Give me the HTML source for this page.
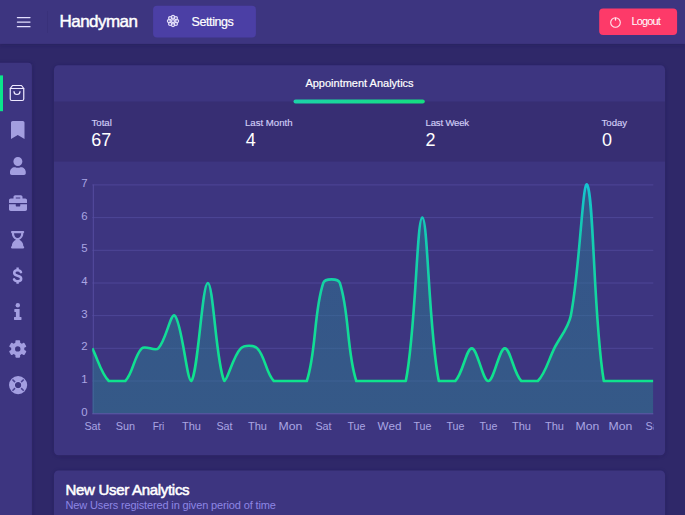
<!DOCTYPE html>
<html>
<head>
<meta charset="utf-8">
<title>Handyman</title>
<style>
*{box-sizing:border-box;margin:0;padding:0}
html,body{width:685px;height:515px;overflow:hidden}
body{background:#2f2869;font-family:"Liberation Sans",sans-serif;position:relative;color:#fff}
.abs{position:absolute}
.brand{left:59.5px;top:10.7px;font-size:17px;line-height:22px;letter-spacing:-.55px;white-space:nowrap;color:#fff;-webkit-text-stroke:.45px #fff}
.btn-set{left:153px;top:6px;width:103px;height:32px}
.btn-set span{position:absolute;left:38.5px;top:6.8px;font-size:12.5px;line-height:18px;letter-spacing:-.4px;white-space:nowrap;-webkit-text-stroke:.2px #fff}
.btn-out{left:599px;top:8px;width:78px;height:27px}
.btn-out span{position:absolute;left:32.5px;top:6.4px;font-size:11px;line-height:15px;letter-spacing:-.88px;white-space:nowrap}
.ico{fill:#a39ee0}
.tab{left:54px;width:611px;text-align:center;font-size:11px;line-height:14px;top:76.4px;white-space:nowrap;-webkit-text-stroke:.2px #fff}
.lab{font-size:9.6px;line-height:12px;color:#d2cef7;white-space:nowrap;-webkit-text-stroke:.15px #d2cef7}
.num{font-size:18px;line-height:20px;color:#fff;white-space:nowrap}
.t2{left:65.5px;top:480.6px;font-size:15px;line-height:18px;white-space:nowrap;letter-spacing:-.3px;-webkit-text-stroke:.55px #fff}
.s2{left:65.5px;top:497.7px;font-size:11px;line-height:14px;color:#8d86e4;white-space:nowrap;letter-spacing:-.14px}
svg{position:absolute;overflow:visible}
svg text{font-family:"Liberation Sans",sans-serif;fill:#aaa5e3}
</style>
</head>
<body>
<svg style="left:0;top:0" width="685" height="515" viewBox="0 0 685 515">
  <defs>
    <filter id="sh" x="-10%" y="-10%" width="120%" height="120%"><feGaussianBlur stdDeviation="2.2"/></filter>
    <linearGradient id="tb" x1="0" x2="1" y1="0" y2="0"><stop offset="0" stop-color="#1cd2a8"/><stop offset="1" stop-color="#15de80"/></linearGradient>
  </defs>
  <!-- shadows -->
  <g fill="#1d1850" opacity=".42" filter="url(#sh)">
    <rect x="0" y="0" width="685" height="44.5"/>
    <rect x="-8" y="64" width="39.5" height="470"/>
    <rect x="54.5" y="66.5" width="610" height="389.5" rx="5"/>
    <rect x="54.5" y="471.5" width="610" height="60" rx="5"/>
  </g>
  <!-- header -->
  <rect x="0" y="0" width="685" height="43.9" fill="#3d3580"/>
  <!-- sidebar -->
  <path d="M0 62.7H27.9a4 4 0 0 1 4 4V520H0z" fill="#3d3580"/>
  <rect x="0" y="75.4" width="3" height="35.8" fill="#0be58c"/>
  <!-- card 1 -->
  <rect x="54" y="65.3" width="611" height="390" rx="4.5" fill="#3d3580"/>
  <rect x="54" y="101.5" width="611" height="60.1" fill="#372e73"/>
  <rect x="293.5" y="99.4" width="131.3" height="4.2" rx="2.1" fill="url(#tb)"/>
  <!-- card 2 -->
  <rect x="54" y="470.4" width="611" height="60" rx="4.5" fill="#3d3580"/>
  <!-- buttons -->
  <rect x="153.1" y="5.7" width="102.8" height="31.9" rx="4" fill="#4b3fa5"/>
  <rect x="599.2" y="8.4" width="77.9" height="26.6" rx="4" fill="#fd3a69"/>
  <!-- burger -->
  <g stroke="#e4e0ff" stroke-width="1.25" stroke-linecap="round"><path d="M17.4 17.5H30M17.4 22.1H30M17.4 26.7H30"/></g>
  <path d="M47.5 11V33" stroke="#39317a" stroke-width="1"/>
</svg>
<div class="abs brand">Handyman</div>

<div class="abs btn-set">
  <svg style="left:13.2px;top:8.4px" width="14" height="14" viewBox="-7 -7 14 14" fill="none" stroke="#e4e0fa" stroke-width="1.25"><circle cx="0" cy="0" r="1.5"/><circle cx="4.10" cy="0.00" r="1.5"/><circle cx="2.90" cy="2.90" r="1.5"/><circle cx="0.00" cy="4.10" r="1.5"/><circle cx="-2.90" cy="2.90" r="1.5"/><circle cx="-4.10" cy="0.00" r="1.5"/><circle cx="-2.90" cy="-2.90" r="1.5"/><circle cx="-0.00" cy="-4.10" r="1.5"/><circle cx="2.90" cy="-2.90" r="1.5"/></svg>
  <span>Settings</span>
</div>

<div class="abs btn-out">
  <svg style="left:11.3px;top:8.9px" width="11" height="11" viewBox="0 0 22 22" fill="none" stroke="#ffe9ef" stroke-width="2.2" stroke-linecap="round">
    <circle cx="11" cy="11" r="9.6"/>
    <path d="M11 3V6.2" stroke-width="2.8"/>
  </svg>
  <span>Logout</span>
</div>


<!-- sidebar icons -->
<svg style="left:7.9px;top:84.2px" width="18" height="18" viewBox="0 0 24 24" fill="none" stroke="#efeaff" stroke-width="1.6" stroke-linecap="round" stroke-linejoin="round"><path d="M6 2L3 6v14a2 2 0 0 0 2 2h14a2 2 0 0 0 2-2V6l-3-4z"/><path d="M3 6h18"/><path d="M16 10a4 4 0 0 1-8 0"/></svg>

<svg class="ico" style="left:10.9px;top:121px" width="13.5" height="18" viewBox="0 0 384 512"><path d="M0 512V48C0 21.49 21.49 0 48 0h288c26.51 0 48 21.49 48 48v464L192 400 0 512z"/></svg>

<svg class="ico" style="left:9.7px;top:156.8px" width="15.75" height="18" viewBox="0 0 448 512"><path d="M224 256c70.7 0 128-57.3 128-128S294.7 0 224 0 96 57.3 96 128s57.3 128 128 128zm89.6 32h-16.7c-22.2 10.2-46.9 16-72.9 16s-50.6-5.8-72.9-16h-16.7C60.2 288 0 348.2 0 422.4V464c0 26.5 21.5 48 48 48h352c26.5 0 48-21.5 48-48v-41.6c0-74.2-60.2-134.4-134.4-134.4z"/></svg>

<svg class="ico" style="left:8.6px;top:194px" width="18" height="18" viewBox="0 0 512 512"><path d="M320 336c0 8.84-7.16 16-16 16h-96c-8.84 0-16-7.16-16-16v-48H0v144c0 25.6 22.4 48 48 48h416c25.6 0 48-22.4 48-48V288H320v48zm144-208h-80V80c0-25.6-22.4-48-48-48H176c-25.6 0-48 22.4-48 48v48H48c-25.6 0-48 22.4-48 48v80h512v-80c0-25.6-22.4-48-48-48zm-144 0H192V96h128v32z"/></svg>

<!-- hourglass-end -->
<svg class="ico" style="left:10.9px;top:230.8px" width="13.2" height="17.4" viewBox="0 0 384 512" preserveAspectRatio="none"><path fill-rule="evenodd" d="M360 0H24C10.7 0 0 10.7 0 24v16c0 13.3 10.7 24 24 24c0 91 51 167.700 120.800 192C75 280.300 24 357 24 448c-13.300 0-24 10.700-24 24v16c0 13.300 10.700 24 24 24h336c13.300 0 24-10.700 24-24v-16c0-13.300-10.700-24-24-24c0-91-51-167.700-120.800-192C309 231.700 360 155 360 64c13.300 0 24-10.700 24-24V24c0-13.300-10.700-24-24-24zM192 208c-57.800 0-104-66.500-104-144h208c0 77.900-46.500 144-104 144z"/></svg>

<!-- dollar -->
<svg style="left:11.8px;top:266.9px" width="11.2" height="17.4" viewBox="0 0 112 174" fill="none" stroke="#a9a4e6" stroke-width="25" stroke-linecap="round" stroke-linejoin="round"><path d="M90 52C84 38 72 33 56 33C37 33 22 42 22 59C22 76 38 82 56 87C76 92 92 100 92 117C92 135 76 142 56 142C39 142 26 136 20 123"/><path d="M56 6V30M56 144V168" stroke-linecap="butt" stroke-width="24"/></svg>

<!-- info -->
<svg class="ico" style="left:13.9px;top:303.2px" width="7.5" height="17" viewBox="0 0 75 170"><circle cx="38" cy="22" r="22"/><path d="M8 60H56V140H70c3 0 5 2 5 5v20c0 3-2 5-5 5H5c-3 0-5-2-5-5v-20c0-3 2-5 5-5H19V90H8c-3 0-5-2-5-5V65c0-3 2-5 5-5z"/></svg>

<!-- cog -->
<svg style="left:8.9px;top:339.6px" width="17.5" height="17.8" viewBox="-100 -100 200 200"><g fill="#a39ee0"><path fill-rule="evenodd" d="M0 -76A76 76 0 1 0 0 76A76 76 0 1 0 0 -76ZM0 -31A31 31 0 1 1 0 31A31 31 0 1 1 0 -31Z"/><rect x="-27" y="-100" width="54" height="50" rx="9" transform="rotate(0)"/><rect x="-27" y="-100" width="54" height="50" rx="9" transform="rotate(60)"/><rect x="-27" y="-100" width="54" height="50" rx="9" transform="rotate(120)"/><rect x="-27" y="-100" width="54" height="50" rx="9" transform="rotate(180)"/><rect x="-27" y="-100" width="54" height="50" rx="9" transform="rotate(240)"/><rect x="-27" y="-100" width="54" height="50" rx="9" transform="rotate(300)"/></g></svg>

<!-- life ring -->
<svg style="left:8.5px;top:375.7px" width="18.2" height="18.2" viewBox="-100 -100 200 200"><path fill="#a39ee0" fill-rule="evenodd" d="M0 -100A100 100 0 1 0 0 100A100 100 0 1 0 0 -100ZM0 -35A35 35 0 1 1 0 35A35 35 0 1 1 0 -35Z"/><g stroke="#4a4290" stroke-width="17" stroke-linecap="butt"><path d="M-33 -33L-62 -62M33 -33L62 -62M-33 33L-62 62M33 33L62 62"/></g><circle r="41" fill="none" stroke="#b5b0ee" stroke-width="6"/></svg>

<!-- card 1 -->
<div class="abs tab">Appointment Analytics</div>

<div class="abs lab" style="left:91.5px;top:116.5px">Total</div>
<div class="abs num" style="left:91.3px;top:130px">67</div>
<div class="abs lab" style="left:245px;top:116.5px">Last Month</div>
<div class="abs num" style="left:245.7px;top:130px">4</div>
<div class="abs lab" style="left:425.6px;top:116.5px;letter-spacing:-.2px">Last Week</div>
<div class="abs num" style="left:425.6px;top:130px">2</div>
<div class="abs lab" style="left:601.5px;top:116.5px">Today</div>
<div class="abs num" style="left:602px;top:130px">0</div>

<svg style="left:0;top:0" width="685" height="515" viewBox="0 0 685 515">
  <defs>
    <linearGradient id="lg" gradientUnits="userSpaceOnUse" x1="0" y1="184" x2="0" y2="414">
      <stop offset="0" stop-color="#16c2d2"/>
      <stop offset=".16" stop-color="#14c9b6"/>
      <stop offset=".55" stop-color="#13d89c"/>
      <stop offset="1" stop-color="#0de886"/>
    </linearGradient>
    <linearGradient id="fg" gradientUnits="userSpaceOnUse" x1="0" y1="184" x2="0" y2="414">
      <stop offset="0" stop-color="#2c7494" stop-opacity=".5"/>
      <stop offset="1" stop-color="#2d7d8f" stop-opacity=".5"/>
    </linearGradient>
    <clipPath id="cp"><rect x="92.2" y="170" width="561.1" height="260"/></clipPath>
    <clipPath id="cpx"><rect x="60" y="415" width="593.6" height="30"/></clipPath>
  </defs>
  <g stroke="#4e4697" stroke-width="1">
    <path d="M92.3 381.0H653.3M92.3 348.3H653.3M92.3 315.6H653.3M92.3 283.0H653.3M92.3 250.3H653.3M92.3 217.6H653.3M92.3 184.9H653.3"/>
  </g>
  <path d="M93.3 184.5V414" stroke="#554d9f" stroke-width="1"/>
  <g clip-path="url(#cp)">
    <path fill="url(#fg)" d="M92.30 348.33 C97.91 359.44 101.07 373.35 108.80 381.01 C112.29 381.01 121.81 381.01 125.30 381.01 C133.03 373.35 134.07 355.99 141.80 348.33 C145.29 344.88 154.81 351.78 158.30 348.33 C166.03 340.67 170.85 311.73 174.80 315.64 C182.07 322.84 186.77 381.01 191.30 381.01 C197.99 374.39 202.19 282.96 207.80 282.96 C213.41 282.96 216.10 364.77 224.30 381.01 C227.32 381.01 233.07 355.99 240.80 348.33 C244.29 344.88 253.81 344.88 257.30 348.33 C265.03 355.99 266.07 373.35 273.80 381.01 C277.29 381.01 284.69 381.01 290.30 381.01 C295.91 381.01 305.20 381.01 306.80 381.01 C316.42 352.42 313.68 311.55 323.30 282.96 C324.90 278.21 338.20 278.21 339.80 282.96 C349.42 311.55 346.68 352.42 356.30 381.01 C357.90 381.01 367.19 381.01 372.80 381.01 C378.41 381.01 383.69 381.01 389.30 381.01 C394.91 381.01 404.78 381.01 405.80 381.01 C416.00 330.52 416.69 217.59 422.30 217.59 C427.91 217.59 428.60 330.52 438.80 381.01 C439.82 381.01 451.81 381.01 455.30 381.01 C463.03 373.35 466.19 348.33 471.80 348.33 C477.41 348.33 482.69 381.01 488.30 381.01 C493.91 381.01 499.19 348.33 504.80 348.33 C510.41 348.33 513.57 373.35 521.30 381.01 C524.79 381.01 534.31 381.01 537.80 381.01 C545.53 373.35 548.69 359.44 554.30 348.33 C559.91 337.22 568.36 327.72 570.80 315.64 C579.58 272.16 582.80 175.99 587.30 184.90 C594.02 198.21 593.45 319.49 603.80 381.01 C604.67 381.01 614.69 381.01 620.30 381.01 C625.91 381.01 631.19 381.01 636.80 381.01 C642.41 381.01 647.69 381.01 653.30 381.01 L653.3 413.7 L92.3 413.7 Z"/>
    <path fill="none" stroke="url(#lg)" stroke-width="2.6" stroke-linecap="butt" stroke-linejoin="round" d="M92.30 348.33 C97.91 359.44 101.07 373.35 108.80 381.01 C112.29 381.01 121.81 381.01 125.30 381.01 C133.03 373.35 134.07 355.99 141.80 348.33 C145.29 344.88 154.81 351.78 158.30 348.33 C166.03 340.67 170.85 311.73 174.80 315.64 C182.07 322.84 186.77 381.01 191.30 381.01 C197.99 374.39 202.19 282.96 207.80 282.96 C213.41 282.96 216.10 364.77 224.30 381.01 C227.32 381.01 233.07 355.99 240.80 348.33 C244.29 344.88 253.81 344.88 257.30 348.33 C265.03 355.99 266.07 373.35 273.80 381.01 C277.29 381.01 284.69 381.01 290.30 381.01 C295.91 381.01 305.20 381.01 306.80 381.01 C316.42 352.42 313.68 311.55 323.30 282.96 C324.90 278.21 338.20 278.21 339.80 282.96 C349.42 311.55 346.68 352.42 356.30 381.01 C357.90 381.01 367.19 381.01 372.80 381.01 C378.41 381.01 383.69 381.01 389.30 381.01 C394.91 381.01 404.78 381.01 405.80 381.01 C416.00 330.52 416.69 217.59 422.30 217.59 C427.91 217.59 428.60 330.52 438.80 381.01 C439.82 381.01 451.81 381.01 455.30 381.01 C463.03 373.35 466.19 348.33 471.80 348.33 C477.41 348.33 482.69 381.01 488.30 381.01 C493.91 381.01 499.19 348.33 504.80 348.33 C510.41 348.33 513.57 373.35 521.30 381.01 C524.79 381.01 534.31 381.01 537.80 381.01 C545.53 373.35 548.69 359.44 554.30 348.33 C559.91 337.22 568.36 327.72 570.80 315.64 C579.58 272.16 582.80 175.99 587.30 184.90 C594.02 198.21 593.45 319.49 603.80 381.01 C604.67 381.01 614.69 381.01 620.30 381.01 C625.91 381.01 631.19 381.01 636.80 381.01 C642.41 381.01 647.69 381.01 653.30 381.01"/>
  </g>
  <path d="M92.3 413.8H653.3" stroke="#6058a8" stroke-width="1"/>
  <g font-size="11.4" text-anchor="end">
    <text x="87.7" y="415.8">0</text>
    <text x="87.7" y="383.1">1</text>
    <text x="87.7" y="350.4">2</text>
    <text x="87.7" y="317.7">3</text>
    <text x="87.7" y="285.1">4</text>
    <text x="87.7" y="252.4">5</text>
    <text x="87.7" y="219.7">6</text>
    <text x="87.7" y="187.0">7</text>
  </g>
  <g font-size="10.9" text-anchor="middle" clip-path="url(#cpx)">
    <text x="92.5" y="430" textLength="16.2" lengthAdjust="spacingAndGlyphs">Sat</text>
    <text x="125.5" y="430" textLength="19.3" lengthAdjust="spacingAndGlyphs">Sun</text>
    <text x="158.5" y="430" textLength="11.7" lengthAdjust="spacingAndGlyphs">Fri</text>
    <text x="191.5" y="430" textLength="19.0" lengthAdjust="spacingAndGlyphs">Thu</text>
    <text x="224.5" y="430" textLength="16.2" lengthAdjust="spacingAndGlyphs">Sat</text>
    <text x="257.5" y="430" textLength="19.0" lengthAdjust="spacingAndGlyphs">Thu</text>
    <text x="290.5" y="430" textLength="23.8" lengthAdjust="spacingAndGlyphs">Mon</text>
    <text x="323.5" y="430" textLength="16.2" lengthAdjust="spacingAndGlyphs">Sat</text>
    <text x="356.5" y="430" textLength="18.0" lengthAdjust="spacingAndGlyphs">Tue</text>
    <text x="389.5" y="430" textLength="23.8" lengthAdjust="spacingAndGlyphs">Wed</text>
    <text x="422.5" y="430" textLength="18.0" lengthAdjust="spacingAndGlyphs">Tue</text>
    <text x="455.5" y="430" textLength="18.0" lengthAdjust="spacingAndGlyphs">Tue</text>
    <text x="488.5" y="430" textLength="18.0" lengthAdjust="spacingAndGlyphs">Tue</text>
    <text x="521.5" y="430" textLength="19.0" lengthAdjust="spacingAndGlyphs">Thu</text>
    <text x="554.5" y="430" textLength="19.0" lengthAdjust="spacingAndGlyphs">Thu</text>
    <text x="587.5" y="430" textLength="23.8" lengthAdjust="spacingAndGlyphs">Mon</text>
    <text x="620.5" y="430" textLength="23.8" lengthAdjust="spacingAndGlyphs">Mon</text>
    <text x="653.5" y="430" textLength="16.2" lengthAdjust="spacingAndGlyphs">Sat</text>
  </g>
</svg>

<!-- card 2 -->
<div class="abs t2">New User Analytics</div>
<div class="abs s2">New Users registered in given period of time</div>
</body>
</html>
